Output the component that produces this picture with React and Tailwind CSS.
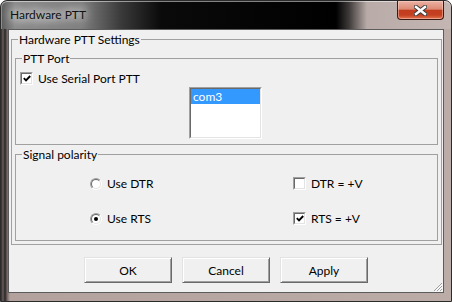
import React from 'react';

function CheckBox({ checked }) {
  return (
    <span className="w-[13px] h-[13px] shrink-0 border border-t-[#a0a0a0] border-l-[#a0a0a0] border-r-white border-b-white">
      <span className="w-full h-full flex items-center justify-center bg-white border border-t-[#696969] border-l-[#696969] border-r-[#e3e3e3] border-b-[#e3e3e3]">
        {checked && (
          <svg width="8" height="7" viewBox="0 0 8 7">
            <path d="M0.8 3.2 L3 5.4 L7.2 1" stroke="#000" strokeWidth="1.9" fill="none" />
          </svg>
        )}
      </span>
    </span>
  );
}

function Radio({ checked }) {
  return (
    <span className="w-[12px] h-[12px] shrink-0 rounded-full border border-t-[#a0a0a0] border-l-[#a0a0a0] border-r-white border-b-white">
      <span className="w-full h-full rounded-full flex items-center justify-center bg-white border border-t-[#696969] border-l-[#696969] border-r-[#e3e3e3] border-b-[#e3e3e3]">
        {checked && <span className="w-[4px] h-[4px] rounded-full bg-black" />}
      </span>
    </span>
  );
}

function Group({ title, className = '', children }) {
  return (
    <fieldset className={`border border-[#a0a0a0] p-0 m-0 min-w-0 ${className}`}>
      <legend className="ml-[6px] px-[1px] leading-[15px]">{title}</legend>
      {children}
    </fieldset>
  );
}

function Button({ children }) {
  return (
    <button className="w-[88px] h-[26px] bg-[#f0f0f0] border border-t-[#e3e3e3] border-l-[#e3e3e3] border-r-[#696969] border-b-[#696969] shadow-[inset_1px_1px_0_#fff,inset_-1px_-1px_0_#a0a0a0] text-[12px] leading-[15px] text-black">
      {children}
    </button>
  );
}

export default function App() {
  return (
    <div className="w-[452px] h-[302px] rounded-t-[7px] border border-[#2b2b2b] bg-[linear-gradient(to_right,#2c2c2c_0px,#6a5c58_2px,#262626_4px,#6e625e_6px,#b2a19d_9px,#bcaca8_100%)] flex flex-col font-['Lato','Liberation_Sans',sans-serif] text-[12px] text-black overflow-hidden">
      {/* Title bar */}
      <div className="h-[28px] shrink-0 rounded-t-[6px] flex items-start justify-between pl-[9px] pr-[7px] bg-[linear-gradient(to_right,#5a5a5a_0px,#8c8c8c_14px,#808080_80px,#3a3a3a_120px,#0a0a0a_160px,#000_335px,#3e3a39_348px,#b9aca8_366px,#c4b7b3_452px)] shadow-[inset_0_1px_0_rgba(255,255,255,0.5),inset_1px_0_0_rgba(255,255,255,0.3)]">
        <span className="mt-[6px] leading-[15px] text-[#111] [text-shadow:0_0_8px_rgba(255,255,255,0.95),0_0_12px_rgba(255,255,255,0.8),0_0_16px_rgba(255,255,255,0.6)]">
          Hardware PTT
        </span>
        <div className="w-[47px] h-[19px] rounded-b-[4px] border border-t-0 border-[#3a1a13] bg-[linear-gradient(#ebb2a4_0%,#dc8a74_45%,#c23d1f_52%,#c4401f_78%,#e2764f_100%)] shadow-[inset_0_0_0_1px_rgba(255,220,210,0.45)] flex items-center justify-center">
          <svg width="13" height="11" viewBox="0 0 13 11">
            <path d="M2 2 L11 9 M11 2 L2 9" stroke="#3b3b3b" strokeWidth="4.4" strokeLinecap="square" />
            <path d="M2 2 L11 9 M11 2 L2 9" stroke="#fff" strokeWidth="2.4" strokeLinecap="square" />
          </svg>
        </div>
      </div>

      {/* Client area */}
      <div className="relative mx-[7px] h-[264px] shrink-0 bg-[#f0f0f0] border border-[#5c5c5c]">
        <Group title="Hardware PTT Settings" className="mt-[2px] ml-[2px] mr-[1px]">
          <div className="px-[3px] pb-[3px]">
            <Group title="PTT Port" className="mt-[4px]">
              <div className="pt-[6px] pb-[5px] pl-[4px]">
                <label className="h-[13px] flex items-center gap-[5px] leading-[15px]">
                  <CheckBox checked />
                  <span>Use Serial Port PTT</span>
                </label>
                <div className="ml-[169px] mt-[2px] w-[73px] h-[52px] border border-t-[#a0a0a0] border-l-[#a0a0a0] border-r-white border-b-white">
                  <div className="w-full h-full bg-white border border-t-[#696969] border-l-[#696969] border-r-[#e3e3e3] border-b-[#e3e3e3]">
                    <div className="h-[15px] leading-[15px] pl-[2px] bg-[#3399ff] text-white">com3</div>
                  </div>
                </div>
              </div>
            </Group>

            <Group title="Signal polarity" className="mt-[2px]">
              <div className="pt-[15px] pb-[15px] pl-[74px] flex flex-col gap-[22px]">
                <div className="h-[13px] flex items-center">
                  <label className="w-[203px] flex items-center gap-[5px] leading-[15px]">
                    <Radio />
                    <span>Use DTR</span>
                  </label>
                  <label className="flex items-center gap-[5px] leading-[15px]">
                    <CheckBox />
                    <span>DTR = +V</span>
                  </label>
                </div>
                <div className="h-[13px] flex items-center">
                  <label className="w-[203px] flex items-center gap-[5px] leading-[15px]">
                    <Radio checked />
                    <span>Use RTS</span>
                  </label>
                  <label className="flex items-center gap-[5px] leading-[15px]">
                    <CheckBox checked />
                    <span>RTS = +V</span>
                  </label>
                </div>
              </div>
            </Group>
          </div>
        </Group>

        <div className="mt-[12px] flex justify-center gap-[10px]">
          <Button>OK</Button>
          <Button>Cancel</Button>
          <Button>Apply</Button>
        </div>

        {/* size grip */}
        <svg className="absolute right-0 bottom-0" width="11" height="11" viewBox="0 0 11 11">
          <path d="M10 2 L2 10 M10 5 L5 10 M10 8 L8 10" stroke="#a0a0a0" strokeWidth="1" />
          <path d="M11 2.8 L2.8 11 M11 5.8 L5.8 11 M11 8.8 L8.8 11" stroke="#fff" strokeWidth="1" />
        </svg>
      </div>
    </div>
  );
}
